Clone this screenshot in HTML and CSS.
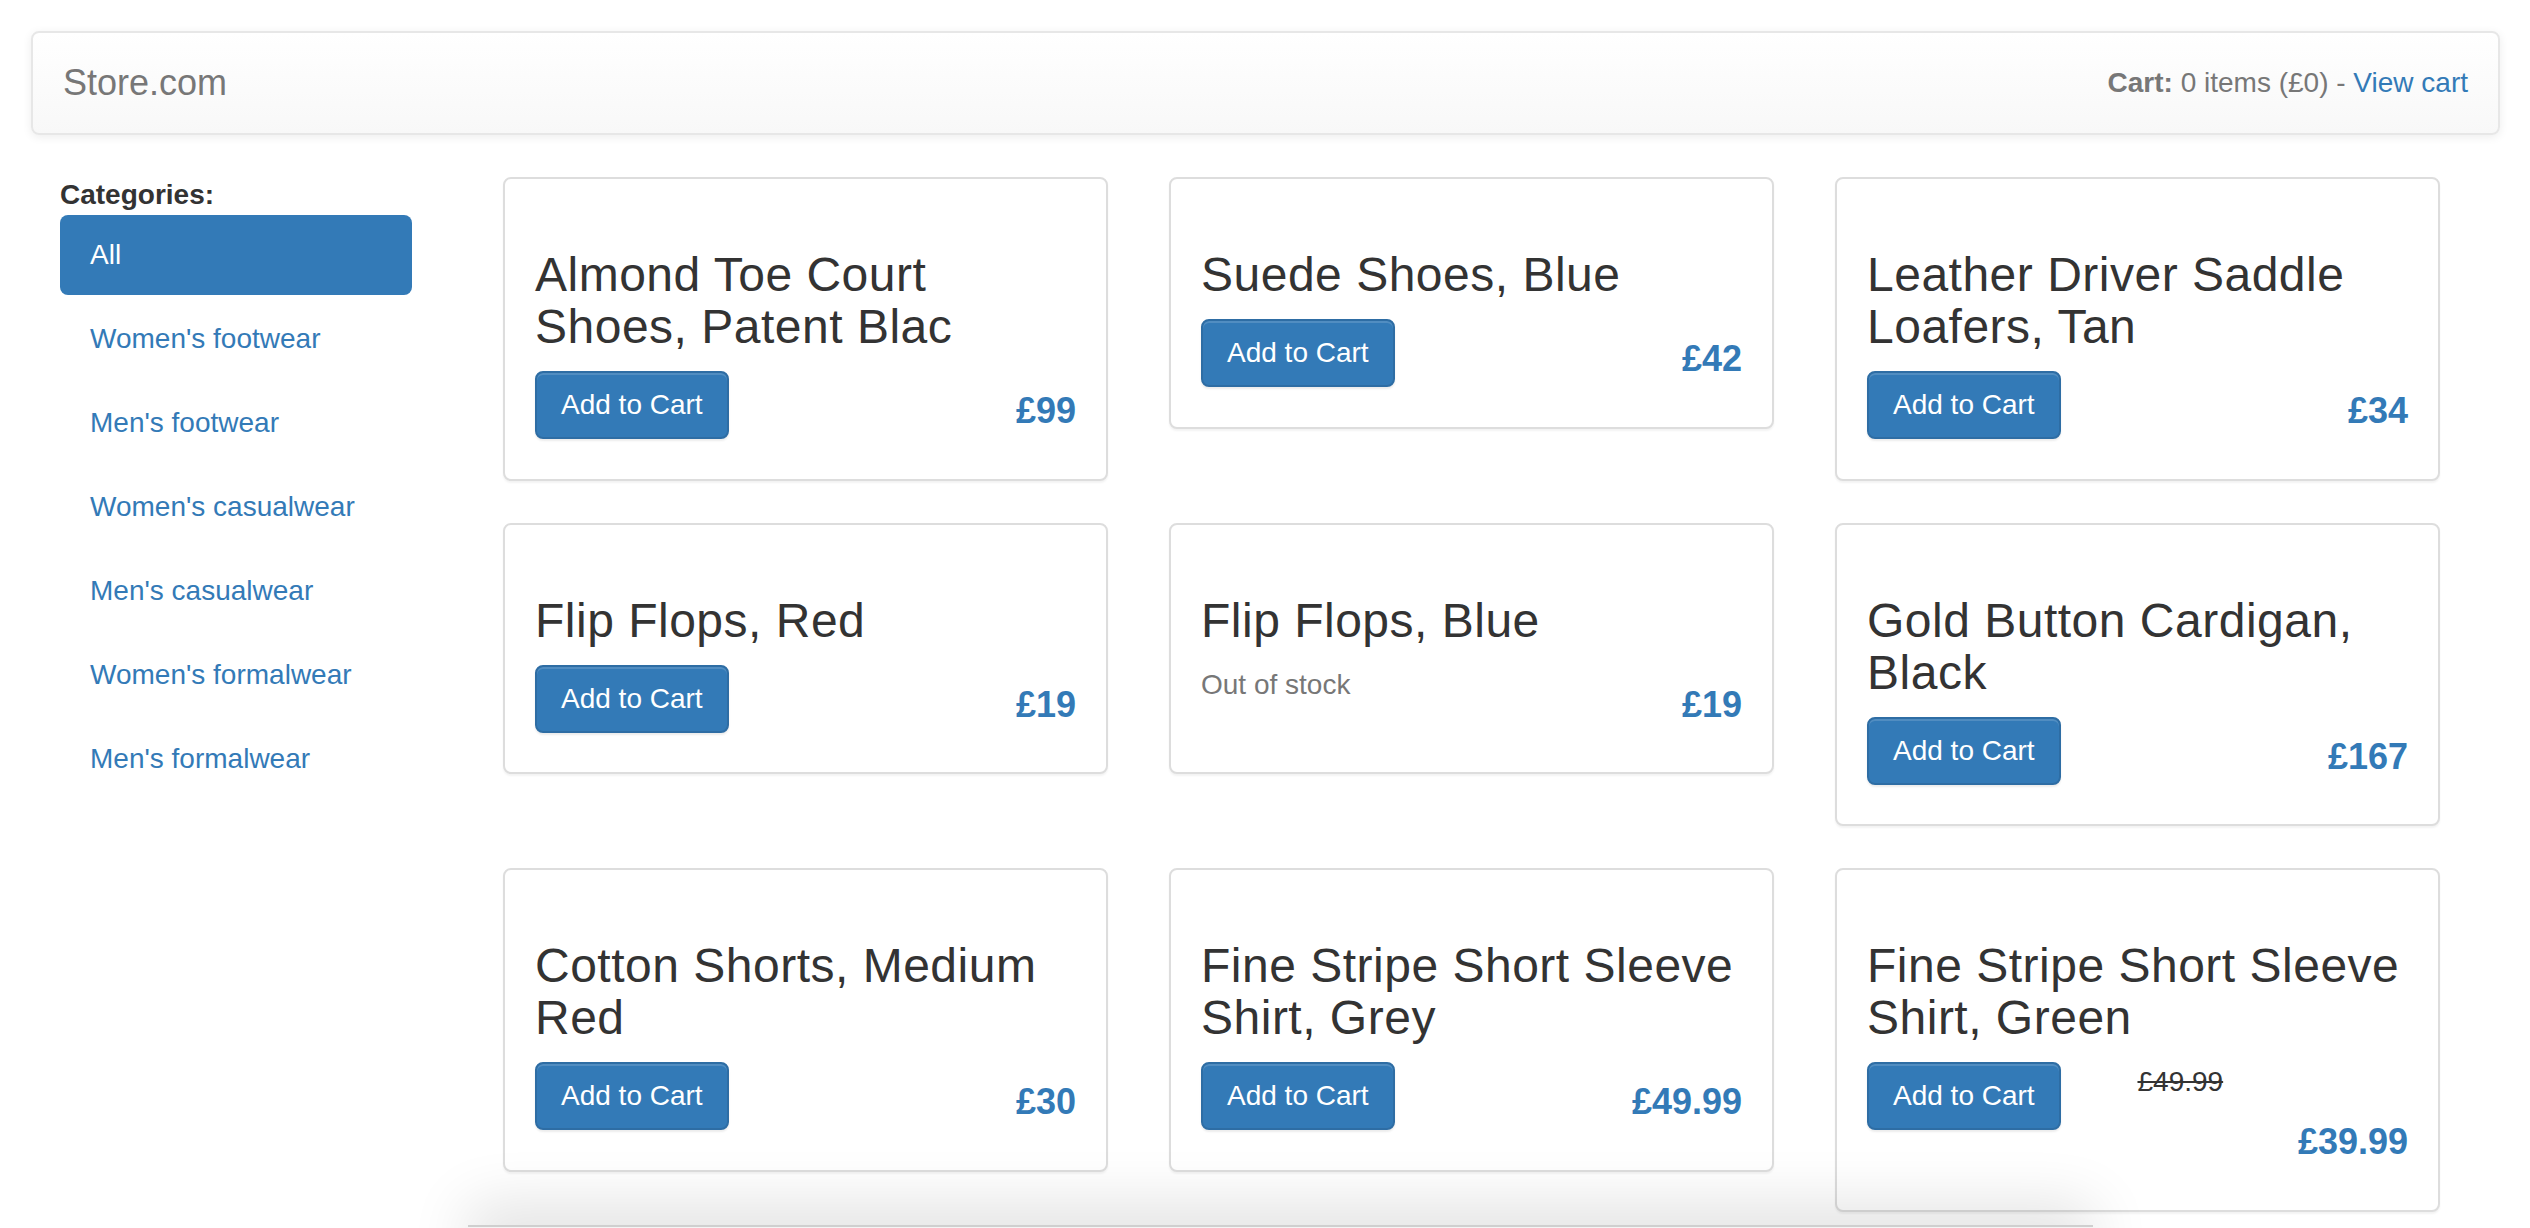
FILE: index.html
```html
<!DOCTYPE html>
<html lang="en">
<head>
<meta charset="utf-8">
<title>Store.com</title>
<link rel="stylesheet" href="styles.css">
</head>
<body>
<div class="page">
  <nav class="navbar">
    <a class="brand" href="#">Store.com</a>
    <p class="cart-text"><strong>Cart:</strong> 0 items (£0) - <a href="#" class="link">View cart</a></p>
  </nav>

  <div class="main">
    <aside class="sidebar">
      <div class="cat-label">Categories:</div>
      <ul class="pills">
        <li><a href="#" class="pill active">All</a></li>
        <li><a href="#" class="pill">Women's footwear</a></li>
        <li><a href="#" class="pill">Men's footwear</a></li>
        <li><a href="#" class="pill">Women's casualwear</a></li>
        <li><a href="#" class="pill">Men's casualwear</a></li>
        <li><a href="#" class="pill">Women's formalwear</a></li>
        <li><a href="#" class="pill">Men's formalwear</a></li>
      </ul>
    </aside>

    <section class="products">
      <div class="card">
        <h3 class="title">Almond Toe Court Shoes, Patent Blac</h3>
        <div class="buy">
          <div class="buy-left"><button class="btn">Add to Cart</button></div>
          <div class="buy-right"><h4 class="price">£99</h4></div>
        </div>
      </div>
      <div class="card">
        <h3 class="title">Suede Shoes, Blue</h3>
        <div class="buy">
          <div class="buy-left"><button class="btn">Add to Cart</button></div>
          <div class="buy-right"><h4 class="price">£42</h4></div>
        </div>
      </div>
      <div class="card">
        <h3 class="title">Leather Driver Saddle Loafers, Tan</h3>
        <div class="buy">
          <div class="buy-left"><button class="btn">Add to Cart</button></div>
          <div class="buy-right"><h4 class="price">£34</h4></div>
        </div>
      </div>

      <div class="card">
        <h3 class="title">Flip Flops, Red</h3>
        <div class="buy">
          <div class="buy-left"><button class="btn">Add to Cart</button></div>
          <div class="buy-right"><h4 class="price">£19</h4></div>
        </div>
      </div>
      <div class="card">
        <h3 class="title">Flip Flops, Blue</h3>
        <div class="buy">
          <div class="buy-left"><p class="muted">Out of stock</p></div>
          <div class="buy-right"><h4 class="price">£19</h4></div>
        </div>
      </div>
      <div class="card">
        <h3 class="title">Gold Button Cardigan, Black</h3>
        <div class="buy">
          <div class="buy-left"><button class="btn">Add to Cart</button></div>
          <div class="buy-right"><h4 class="price">£167</h4></div>
        </div>
      </div>

      <div class="card">
        <h3 class="title">Cotton Shorts, Medium Red</h3>
        <div class="buy">
          <div class="buy-left"><button class="btn">Add to Cart</button></div>
          <div class="buy-right"><h4 class="price">£30</h4></div>
        </div>
      </div>
      <div class="card">
        <h3 class="title">Fine Stripe Short Sleeve Shirt, Grey</h3>
        <div class="buy">
          <div class="buy-left"><button class="btn">Add to Cart</button></div>
          <div class="buy-right"><h4 class="price">£49.99</h4></div>
        </div>
      </div>
      <div class="card">
        <h3 class="title">Fine Stripe Short Sleeve Shirt, Green</h3>
        <div class="buy">
          <div class="buy-left"><button class="btn">Add to Cart</button></div>
          <div class="buy-right">
            <del class="was">£49.99</del>
            <h4 class="price">£39.99</h4>
          </div>
        </div>
      </div>
    </section>
  </div>
  <div class="drawer"></div>
</div>
</body>
</html>
```

FILE: styles.css
```css
html, body {
  margin: 0;
  padding: 0;
  background: #fff;
}

body {
  font-family: "Liberation Sans", Arial, Helvetica, sans-serif;
  font-size: 28px;
  line-height: 40px;
  color: #333;
  overflow: hidden;
}

.page {
  position: relative;
  height: 1228px;
  padding: 31px 30px 0 31px;
  box-sizing: border-box;
  overflow: hidden;
}

a {
  text-decoration: none;
}

.link {
  color: #337ab7;
}

/* Navbar */
.navbar {
  display: flex;
  justify-content: space-between;
  align-items: flex-start;
  height: 100px;
  border: 2px solid #e7e7e7;
  border-radius: 8px;
  background: linear-gradient(to bottom, #ffffff 0%, #f8f8f8 100%);
  box-shadow: inset 0 2px 0 rgba(255, 255, 255, 0.15), 0 2px 10px rgba(0, 0, 0, 0.075);
  margin-bottom: 40px;
}

.brand {
  display: block;
  padding: 30px;
  font-size: 36px;
  line-height: 40px;
  color: #777;
}

.cart-text {
  margin: 30px 30px 0 0;
  color: #777;
  font-size: 28px;
  line-height: 40px;
}

.cart-text strong {
  font-weight: bold;
}

/* Main layout */
.main {
  display: flex;
  align-items: flex-start;
}

.sidebar {
  width: 352px;
  margin-left: 29px;
  flex: none;
}

.cat-label {
  font-weight: bold;
  line-height: 40px;
}

.pills {
  list-style: none;
  margin: 0;
  padding: 0;
  display: flex;
  flex-direction: column;
  gap: 4px;
}

.pill {
  display: block;
  padding: 20px 30px;
  line-height: 40px;
  border-radius: 8px;
  color: #337ab7;
}

.pill.active {
  background: #337ab7;
  color: #fff;
}

/* Products */
.products {
  margin-left: 91px;
  padding-top: 2px;
  display: grid;
  grid-template-columns: repeat(3, 605px);
  column-gap: 61px;
  row-gap: 42px;
  align-items: start;
}

.card {
  border: 2px solid #ddd;
  border-radius: 8px;
  padding: 30px;
  background: #fff;
  box-shadow: 0 2px 2px rgba(0, 0, 0, 0.05);
}

.title {
  margin: 40px 0 18px;
  font-size: 48px;
  line-height: 52px;
  font-weight: normal;
  letter-spacing: 0.5px;
  color: #333;
}

.buy {
  display: flex;
  align-items: flex-start;
}

.buy-left,
.buy-right {
  flex: 0 0 50%;
  min-width: 0;
}

.buy-right {
  display: flex;
  flex-direction: column;
}

.btn {
  display: inline-block;
  height: 68px;
  padding: 12px 24px;
  font-family: inherit;
  font-size: 28px;
  line-height: 40px;
  color: #fff;
  background: #337ab7;
  border: 2px solid #2e6da4;
  border-radius: 8px;
  box-shadow: inset 0 2px 0 rgba(255, 255, 255, 0.15), 0 2px 2px rgba(0, 0, 0, 0.075);
  box-sizing: border-box;
  cursor: pointer;
}

.muted {
  margin: 0;
  color: #777;
  line-height: 40px;
}

.price {
  margin: 20px 0 18px;
  text-align: right;
  font-size: 36px;
  line-height: 39.6px;
  font-weight: bold;
  color: #337ab7;
}

.was {
  display: block;
  line-height: 40px;
  color: #333;
}

/* element peeking at the bottom of the viewport */
.drawer {
  position: absolute;
  left: 468px;
  top: 1225px;
  width: 1625px;
  height: 60px;
  background: #f4f4f4;
  border-top: 2px solid #cfcfcf;
  box-shadow: 0 -20px 60px rgba(0, 0, 0, 0.12);
}
```
